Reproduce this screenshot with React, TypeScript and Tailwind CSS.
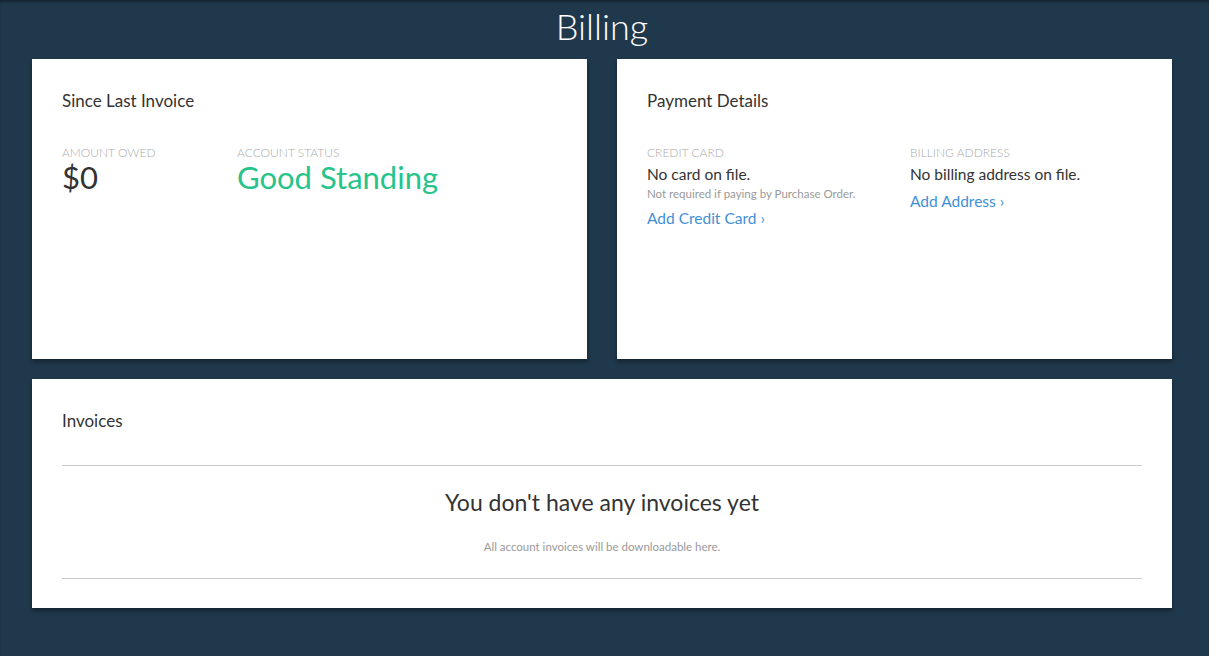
import React from 'react'

function Label({ children }: { children: React.ReactNode }) {
  return <div className="text-[12px] leading-[16px] uppercase text-[#aaaaaa] font-light">{children}</div>
}

export default function App() {
  return (
    <div className="min-h-[656px] bg-[#1f384b] font-['Lato',sans-serif] shadow-[inset_0_3px_3px_-1px_rgba(0,0,0,0.35)] pl-8 pr-[37px] pb-12">
      <h1 className="text-center text-white text-[36px] leading-[52px] font-light">Billing</h1>

      <div className="grid grid-cols-2 gap-[30px] mt-[7px]">
        <section className="bg-white h-[300px] p-[30px] shadow-[0_3px_4px_rgba(0,0,0,0.35)]">
          <h2 className="text-[17px] leading-[24px] text-[#333333]">Since Last Invoice</h2>
          <div className="flex mt-[32px]">
            <div className="w-[175px]">
              <Label>Amount Owed</Label>
              <div className="text-[31px] leading-[32px] text-[#333333]">$0</div>
            </div>
            <div>
              <Label>Account Status</Label>
              <div className="text-[31px] leading-[32px] text-[#26c48a]">Good Standing</div>
            </div>
          </div>
        </section>

        <section className="bg-white h-[300px] p-[30px] shadow-[0_3px_4px_rgba(0,0,0,0.35)]">
          <h2 className="text-[17px] leading-[24px] text-[#333333]">Payment Details</h2>
          <div className="flex mt-[32px]">
            <div className="w-[263px]">
              <Label>Credit Card</Label>
              <div className="text-[15.5px] leading-[26px] text-[#333333]">No card on file.</div>
              <div className="text-[11.5px] leading-[14px] text-[#999999]">Not required if paying by Purchase Order.</div>
              <a href="#" className="block text-[15.5px] leading-[34px] text-[#3f8fd6]">Add Credit Card ›</a>
            </div>
            <div>
              <Label>Billing Address</Label>
              <div className="text-[15.5px] leading-[26px] text-[#333333]">No billing address on file.</div>
              <a href="#" className="block text-[15.5px] leading-[28px] text-[#3f8fd6]">Add Address ›</a>
            </div>
          </div>
        </section>
      </div>

      <section className="bg-white mt-[20px] px-[30px] pt-[30px] pb-[29px] shadow-[0_3px_4px_rgba(0,0,0,0.35)]">
        <h2 className="text-[17px] leading-[24px] text-[#333333]">Invoices</h2>
        <div className="mt-[32px] border-t border-b border-[#cccccc] text-center pt-[22px] pb-[24px]">
          <div className="text-[23px] leading-[28px] text-[#333333]">You don't have any invoices yet</div>
          <div className="mt-[24px] text-[11.5px] leading-[14px] text-[#999999]">All account invoices will be downloadable here.</div>
        </div>
      </section>
    </div>
  )
}
